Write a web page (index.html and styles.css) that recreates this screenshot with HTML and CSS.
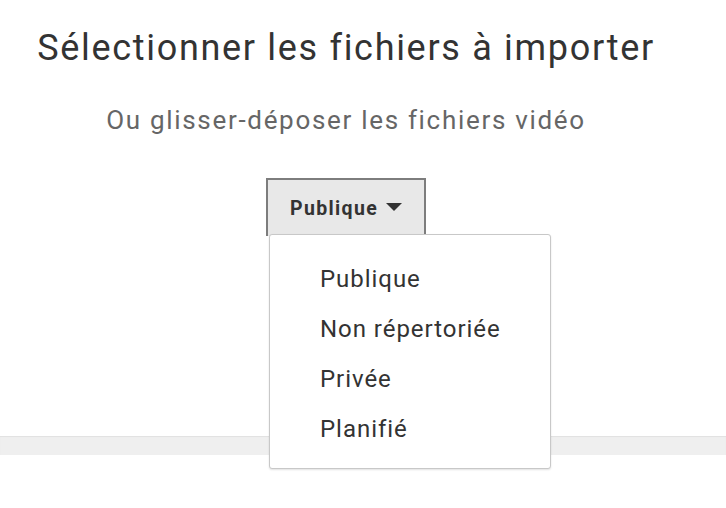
FILE: index.html
```html
<!DOCTYPE html>
<html lang="fr">
<head>
<meta charset="utf-8">
<link rel="stylesheet" href="styles.css">
</head>
<body>
<div class="page">
  <h1 class="title">Sélectionner les fichiers à importer</h1>
  <p class="subtitle">Ou glisser-déposer les fichiers vidéo</p>
  <div class="picker-row">
    <div class="picker">
      <button class="picker-btn">Publique <span class="caret"></span></button>
      <ul class="menu">
        <li>Publique</li>
        <li>Non répertoriée</li>
        <li>Privée</li>
        <li>Planifié</li>
      </ul>
    </div>
  </div>
</div>
<div class="band"></div>
</body>
</html>
```
FILE: styles.css
```css
html, body {
  margin: 0;
  padding: 0;
  background: #fff;
  font-family: Roboto, "Liberation Sans", sans-serif;
}
body {
  min-height: 508px;
}
.page {
  width: 692px;
  text-align: center;
  padding-top: 28px;
}
.title {
  margin: 0;
  font-size: 36px;
  font-weight: 400;
  letter-spacing: 0.047em;
  color: #333;
  line-height: 40px;
  white-space: nowrap;
}
.subtitle {
  margin: 36px 0 0;
  font-size: 26px;
  letter-spacing: 0.065em;
  color: #666;
  line-height: 32px;
  white-space: nowrap;
}
.picker-row {
  display: flex;
  justify-content: center;
  margin-top: 42px;
}
.picker {
  position: relative;
  text-align: left;
}
.picker-btn {
  display: flex;
  align-items: center;
  gap: 8px;
  width: 160px;
  height: 58px;
  padding: 0 0 0 22px;
  border: 2px solid #7d7d7d;
  border-bottom: none;
  background: #e8e8e8;
  font-family: Roboto, "Liberation Sans", sans-serif;
  font-size: 19.5px;
  font-weight: 700;
  letter-spacing: 0.07em;
  color: #333;
  box-sizing: border-box;
}
.caret {
  width: 0;
  height: 0;
  border-left: 8px solid transparent;
  border-right: 8px solid transparent;
  border-top: 8px solid #333;
  margin-top: -2px;
}
.menu {
  position: absolute;
  left: 3px;
  top: 56px;
  width: 282px;
  height: 235px;
  margin: 0;
  padding: 19px 0 0 50px;
  box-sizing: border-box;
  list-style: none;
  background: #fff;
  border: 1px solid #c8c8c8;
  border-radius: 3px;
  box-shadow: 0 1px 2px rgba(0,0,0,0.12);
  z-index: 2;
}
.menu li {
  font-size: 24px;
  letter-spacing: 0.04em;
  line-height: 50px;
  color: #333;
}
.band {
  height: 19px;
  margin-top: 200px;
  background: #efefef;
  box-shadow: inset 0 1px 1px rgba(0,0,0,0.06);
}
```
